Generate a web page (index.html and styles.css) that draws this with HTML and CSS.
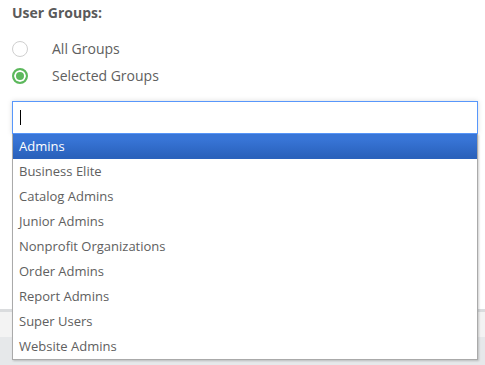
FILE: index.html
```html
<!DOCTYPE html>
<html lang="en">
<head>
    <meta charset="UTF-8">
    <title>User Groups</title>
    <link rel="stylesheet" href="styles.css">
</head>
<body>
    <div class="panel">
        <div class="field-label">User Groups:</div>
        <div class="radio-list">
            <label class="radio-row">
                <span class="radio"></span>
                <span class="radio-text">All Groups</span>
            </label>
            <label class="radio-row">
                <span class="radio checked"></span>
                <span class="radio-text">Selected Groups</span>
            </label>
        </div>
        <div class="chosen-container">
            <div class="chosen-search">
                <span class="caret"></span>
            </div>
            <ul class="chosen-results">
                <li class="highlighted">Admins</li>
                <li>Business Elite</li>
                <li>Catalog Admins</li>
                <li>Junior Admins</li>
                <li>Nonprofit Organizations</li>
                <li>Order Admins</li>
                <li>Report Admins</li>
                <li>Super Users</li>
                <li>Website Admins</li>
            </ul>
        </div>
    </div>
    <div class="footer">
        <div class="footer-top"></div>
        <div class="footer-bottom"></div>
    </div>
</body>
</html>
```

FILE: styles.css
```css
:root {
    --text-color: #606060;
    --focus-color: #5897fb;
    --check-color: #5cb85c;
}

html, body {
    height: 100%;
}

body {
    margin: 0;
    font-family: 'Open Sans', 'Liberation Sans', sans-serif;
    color: var(--text-color);
    display: flex;
    flex-direction: column;
    min-height: 365px;
}

.panel {
    background-color: #ffffff;
    height: 309px;
    flex-shrink: 0;
    padding: 0 7px 0 12px;
    box-sizing: border-box;
    position: relative;
    z-index: 2;
}

.field-label {
    font-size: 14px;
    font-weight: 700;
    line-height: 20px;
    padding-top: 3px;
    color: #5a5a5a;
}

.radio-list {
    padding-top: 12px;
}

.radio-row {
    display: flex;
    align-items: center;
    height: 27px;
}

.radio {
    width: 16px;
    height: 16px;
    border: 1px solid #cfcfcf;
    border-radius: 50%;
    box-sizing: border-box;
    background-color: #fff;
}

.radio.checked {
    border: 2px solid var(--check-color);
    background-color: var(--check-color);
    box-shadow: inset 0 0 0 2px #fff;
}

.radio-text {
    margin-left: 24px;
    font-size: 14px;
    color: var(--text-color);
}

.chosen-container {
    position: relative;
    margin-top: 12px;
}

.chosen-search {
    height: 33px;
    border: 1px solid var(--focus-color);
    box-sizing: border-box;
    background-color: #fff;
    box-shadow: 0 0 5px rgba(0, 0, 0, 0.15);
    display: flex;
    align-items: center;
    padding-left: 7px;
}

.caret {
    width: 1px;
    height: 15px;
    background-color: #000;
}

.chosen-results {
    position: absolute;
    top: 33px;
    left: 0;
    right: 0;
    margin: 0;
    padding: 0;
    list-style: none;
    background-color: #fff;
    border: 1px solid #aaaaaa;
    border-top: none;
    box-shadow: 1px 1px 2px rgba(0, 0, 0, 0.2);
    z-index: 10;
}

.chosen-results li {
    height: 25px;
    line-height: 25px;
    padding-left: 6px;
    font-size: 13px;
    color: var(--text-color);
}

.chosen-results li.highlighted {
    color: #fff;
    background-color: #3875d7;
    background-image: linear-gradient(#3875d7 20%, #2a62bc 90%);
}

.footer {
    flex: 1;
    display: flex;
    flex-direction: column;
}

.footer-top {
    border-top: 3px solid #dadcde;
    background-color: #f3f3f3;
    height: 25px;
}

.footer-bottom {
    flex: 1;
    background-color: #e6e8ea;
}
```
